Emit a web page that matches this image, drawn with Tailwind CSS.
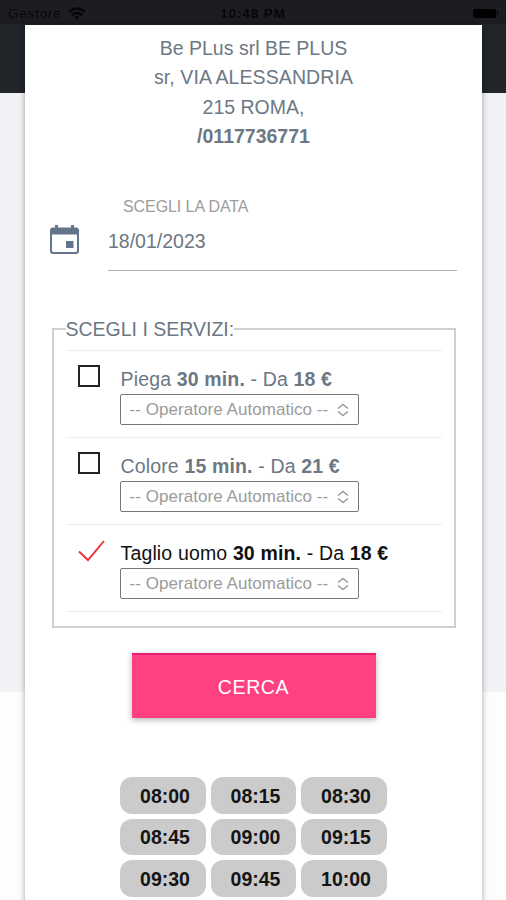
<!DOCTYPE html>
<html lang="it">
<head>
<meta charset="utf-8">
<meta name="viewport" content="width=device-width, initial-scale=1">
<title>Prenotazione</title>
<script src="https://cdn.jsdelivr.net/npm/@tailwindcss/browser@4"></script>
</head>
<body class="relative h-[900px] overflow-hidden bg-[#fdfdfd] font-['Liberation_Sans',Arial,sans-serif] text-[19.5px] text-[#6c7884]">
  <!-- Page behind the modal -->
  <div class="h-[692px] bg-[#f1f2f5]">
    <header class="h-[93px] bg-[#212529]">
      <div class="grid h-6 grid-cols-3 items-center bg-[#1c1d21] px-2 text-[13.5px] leading-6 text-black/80">
        <div class="flex items-center gap-[6px]">
          <span class="pt-[2px] tracking-[0.8px]">Gestore</span>
          <svg class="h-[13px] w-[18px]" viewBox="0 0 18 13" fill="none" stroke="currentColor" stroke-width="2.5"><path d="M1 5Q9-2 17 5M4 8.200Q9 4 14 8.200"/><path d="M6.300 10.100Q9 8 11.700 10.100L9 12.800Z" fill="currentColor" stroke="none"/></svg>
        </div>
        <span class="whitespace-nowrap pt-[2px] text-center font-bold tracking-[0.9px]">10:48 PM</span>
        <div class="flex items-center justify-end gap-px"><span class="h-[9px] w-[23px] rounded-[2px] bg-black"></span><span class="h-1 w-px bg-black"></span></div>
      </div>
    </header>
  </div>

  <!-- Booking modal -->
  <main class="absolute left-[25px] top-[25px] flex h-[900px] w-[457px] flex-col items-center bg-white shadow-[0_0_6px_rgba(0,0,0,0.35)]">
    <div class="pt-[9px] text-center leading-[29.3px]">
      <p>Be PLus srl BE PLUS</p>
      <p class="tracking-[0.1px]">sr, VIA ALESSANDRIA</p>
      <p>215 ROMA,</p>
      <p class="font-bold">/0117736771</p>
    </div>

    <div class="mt-[43px] flex h-[77px] w-full pl-[25px] pr-[25px]">
      <svg class="mt-[30px] h-[31px] w-[29px] shrink-0" viewBox="0 0 29 31"><path fill="#64748a" d="M5 1h3v2.500h13V1h3v2.500H26q3 0 3 3V27q0 3-3 3H3q-3 0-3-3V6.500q0-3 3-3h2zM2 10.500V26.500q0 1.500 1.500 1.500h22q1.500 0 1.500-1.500V10.500z"/><path fill="#64748a" d="M16 17h7.500v7H16z"/></svg>
      <div class="ml-[29px] flex-1 border-b-[1.500px] border-[#b0b0b0]">
        <div class="pl-[15px] pt-px text-[16px] leading-6 tracking-[-0.08px] text-[#9c9c9c]">SCEGLI LA DATA</div>
        <div class="mt-[10px] leading-6">18/01/2023</div>
      </div>
    </div>

    <fieldset class="mt-[44px] h-[313px] w-[404px] border-2 border-[#d0d0d0] px-[12px]">
      <legend class="leading-7">SCEGLI I SERVIZI:</legend>
      <div class="mt-[7px] w-[376px] divide-y divide-[#ededed] border-y border-[#ededed] tracking-[0.15px]">
        <div class="flex h-[87px] pl-[12px] pt-[14px]">
          <span class="h-[22px] w-[22px] border-2 border-[#222]"></span>
          <div class="ml-[20px]">
            <p class="pl-px leading-[29px]">Piega <b>30 min.</b> - Da <b>18 €</b></p>
            <div class="flex h-[31px] w-[239px] items-center rounded-[2px] border-[1.500px] border-[#777] pl-[9px] text-[17px] tracking-[0.05px] text-[#9b9b9b]">
              <span>-- Operatore Automatico --</span>
              <svg class="ml-[9px] h-[14px] w-3" viewBox="0 0 12 14" fill="none" stroke="#999" stroke-width="1.500"><path d="M1 5.500l5-4 5 4M1 8.500l5 4 5-4"/></svg>
            </div>
          </div>
        </div>
        <div class="flex h-[87px] pl-[12px] pt-[14px]">
          <span class="h-[22px] w-[22px] border-2 border-[#222]"></span>
          <div class="ml-[20px]">
            <p class="pl-px leading-[29px]">Colore <b>15 min.</b> - Da <b>21 €</b></p>
            <div class="flex h-[31px] w-[239px] items-center rounded-[2px] border-[1.500px] border-[#777] pl-[9px] text-[17px] tracking-[0.05px] text-[#9b9b9b]">
              <span>-- Operatore Automatico --</span>
              <svg class="ml-[9px] h-[14px] w-3" viewBox="0 0 12 14" fill="none" stroke="#999" stroke-width="1.500"><path d="M1 5.500l5-4 5 4M1 8.500l5 4 5-4"/></svg>
            </div>
          </div>
        </div>
        <div class="flex h-[86px] pl-[12px] pt-[14px]">
          <svg class="mt-px h-[22px] w-[27px]" viewBox="0 0 27 22" fill="none" stroke="#ed3034" stroke-width="1.900"><path d="M1 11.500l9 8.500L26 1"/></svg>
          <div class="ml-[15px] text-[#111]">
            <p class="pl-px leading-[29px]">Taglio uomo <b>30 min.</b> - Da <b>18 €</b></p>
            <div class="flex h-[31px] w-[239px] items-center rounded-[2px] border-[1.500px] border-[#777] pl-[9px] text-[17px] tracking-[0.05px] text-[#9b9b9b]">
              <span>-- Operatore Automatico --</span>
              <svg class="ml-[9px] h-[14px] w-3" viewBox="0 0 12 14" fill="none" stroke="#999" stroke-width="1.500"><path d="M1 5.500l5-4 5 4M1 8.500l5 4 5-4"/></svg>
            </div>
          </div>
        </div>
      </div>
    </fieldset>

    <button class="mt-[25px] h-[65px] w-[244px] shrink-0 border-t-2 border-[#e91e73] bg-[#ff4081] pt-[2px] tracking-[0.6px] text-white shadow-[0_2px_6px_rgba(0,0,0,0.3)]">CERCA</button>

    <div class="mt-[59px] grid grid-cols-3 gap-x-[5px] gap-y-[5px] font-bold text-[#151515]">
      <span class="flex h-[36.500px] w-[85.500px] items-center justify-center rounded-[12px] bg-[#cbcbcb] pl-1 pt-[2px]">08:00</span>
      <span class="flex h-[36.500px] w-[85.500px] items-center justify-center rounded-[12px] bg-[#cbcbcb] pl-1 pt-[2px]">08:15</span>
      <span class="flex h-[36.500px] w-[85.500px] items-center justify-center rounded-[12px] bg-[#cbcbcb] pl-1 pt-[2px]">08:30</span>
      <span class="flex h-[36.500px] w-[85.500px] items-center justify-center rounded-[12px] bg-[#cbcbcb] pl-1 pt-px">08:45</span>
      <span class="flex h-[36.500px] w-[85.500px] items-center justify-center rounded-[12px] bg-[#cbcbcb] pl-1 pt-px">09:00</span>
      <span class="flex h-[36.500px] w-[85.500px] items-center justify-center rounded-[12px] bg-[#cbcbcb] pl-1 pt-px">09:15</span>
      <span class="flex h-[36.500px] w-[85.500px] items-center justify-center rounded-[12px] bg-[#cbcbcb] pl-1 pt-[2px]">09:30</span>
      <span class="flex h-[36.500px] w-[85.500px] items-center justify-center rounded-[12px] bg-[#cbcbcb] pl-1 pt-[2px]">09:45</span>
      <span class="flex h-[36.500px] w-[85.500px] items-center justify-center rounded-[12px] bg-[#cbcbcb] pl-1 pt-[2px]">10:00</span>
    </div>
  </main>
</body>
</html>
